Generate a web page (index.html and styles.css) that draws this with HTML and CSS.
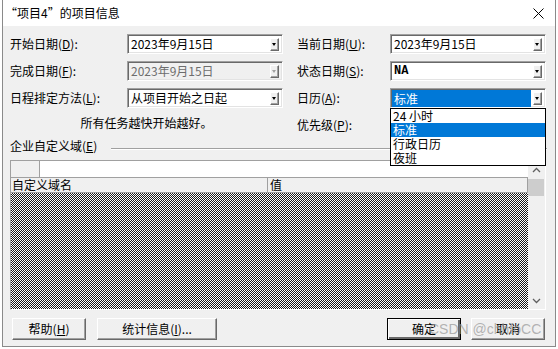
FILE: index.html
```html
<!DOCTYPE html>
<html>
<head>
    <title>项目信息</title>
    <link rel="stylesheet" href="styles.css">
</head>
<body>

<div class="window">
    <div class="titlebar">
        <span class="title">“项目4”的项目信息</span>
        <svg class="close" width="11" height="11" viewBox="0 0 11 11">
            <path d="M0.5 0.5L10.5 10.5M10.5 0.5L0.5 10.5" stroke="#000" stroke-width="1" fill="none"/>
        </svg>
    </div>

    <div class="content">
        <div class="form">
            <label>开始日期(<u>D</u>):</label>
            <div class="combo"><span class="value">2023年9月15日</span><span class="drop"></span></div>
            <label>当前日期(<u>U</u>):</label>
            <div class="combo"><span class="value">2023年9月15日</span><span class="drop"></span></div>

            <label>完成日期(<u>F</u>):</label>
            <div class="combo disabled"><span class="value">2023年9月15日</span><span class="drop"></span></div>
            <label>状态日期(<u>S</u>):</label>
            <div class="combo"><span class="value mono">NA</span><span class="drop"></span></div>

            <label>日程排定方法(<u>L</u>):</label>
            <div class="combo"><span class="value">从项目开始之日起</span><span class="drop"></span></div>
            <label>日历(<u>A</u>):</label>
            <div class="combo open">
                <span class="value"><span class="selected">标准</span></span><span class="drop"></span>
                <ul class="droplist">
                    <li>24&nbsp;小时</li>
                    <li class="active">标准</li>
                    <li>行政日历</li>
                    <li>夜班</li>
                </ul>
            </div>

            <div class="note">所有任务越快开始越好。</div>
            <label>优先级(<u>P</u>):</label>
            <div class="combo"><span class="value"></span><span class="drop"></span></div>
        </div>

        <div class="group-head">
            <span>企业自定义域(<u>E</u>)</span>
            <span class="groove"></span>
        </div>

        <div class="grid">
            <div class="grid-main">
                <div class="edit-row">
                    <span class="corner"></span>
                    <span class="edit-cell"></span>
                </div>
                <div class="head-row">
                    <span class="col-name">自定义域名</span>
                    <span class="col-value">值</span>
                </div>
                <div class="empty"></div>
            </div>
            <div class="scrollbar">
                <div class="arrow">
                    <svg width="9" height="6" viewBox="0 0 9 6"><polyline points="1,5 4.5,1.5 8,5" stroke="#606060" stroke-width="1.3" fill="none"/></svg>
                </div>
                <div class="thumb"></div>
                <div class="track"></div>
                <div class="arrow">
                    <svg width="9" height="6" viewBox="0 0 9 6"><polyline points="1,1 4.5,4.5 8,1" stroke="#606060" stroke-width="1.3" fill="none"/></svg>
                </div>
            </div>
        </div>

        <div class="buttons">
            <button class="btn">帮助(<u>H</u>)</button>
            <button class="btn wide">统计信息(<u>I</u>)...</button>
            <span class="spacer"></span>
            <button class="btn default">确定</button>
            <button class="btn">取消</button>
        </div>
    </div>

    <div class="watermark">CSDN @chhfoCC</div>
</div>

</body>
</html>
```

FILE: styles.css
```css
html, body {
    margin: 0;
    background-color: #ffffff;
}

body {
    font-family: "Noto Sans CJK SC", "Microsoft YaHei", sans-serif;
    font-size: 12px;
    color: #000000;
}

u {
    text-decoration: underline;
    text-underline-offset: 1px;
}

.window {
    position: relative;
    margin-left: 2px;
    width: 554px;
    height: 347px;
    box-sizing: border-box;
    border: 1px solid #8a8a8a;
    border-top: none;
    background-color: #f0f0f0;
    overflow: hidden;
}

.titlebar {
    height: 26px;
    background-color: #ffffff;
    display: flex;
    align-items: center;
    justify-content: space-between;
    padding: 0 11px 0 2px;
}

.title {
    line-height: 16px;
}

.content {
    padding: 8px 8px 0 7px;
}

/* top form: label / combo / label / combo */
.form {
    display: grid;
    grid-template-columns: 117px 170px 93px 156px;
    grid-auto-rows: 20px;
    row-gap: 7px;
    align-items: center;
}

.form label {
    line-height: 16px;
    white-space: nowrap;
}

.combo {
    position: relative;
    width: 156px;
    height: 20px;
    box-sizing: border-box;
    display: flex;
    align-items: center;
    background-color: #ffffff;
    border-style: solid;
    border-width: 1px;
    border-color: #a0a0a0 #ffffff #ffffff #a0a0a0;
    box-shadow: inset 1px 1px #696969, inset -1px -1px #e3e3e3;
}

.combo .value {
    flex: 1;
    height: 16px;
    line-height: 16px;
    padding-left: 3px;
    white-space: nowrap;
    overflow: hidden;
}

.combo .mono {
    font-family: "Liberation Mono", monospace;
    font-weight: bold;
}

.combo.disabled {
    background-color: #f0f0f0;
}

.combo.disabled .value {
    color: #6d6d6d;
}

.drop {
    position: relative;
    width: 9px;
    height: 13px;
    margin: 1px 3px 0 2px;
    box-sizing: border-box;
    background-color: #f0f0f0;
    border: 1px solid;
    border-color: #ffffff #696969 #696969 #ffffff;
    box-shadow: inset -1px -1px #a0a0a0;
}

.drop::after {
    content: "";
    position: absolute;
    left: 1px;
    top: 4px;
    border-left: 2.5px solid transparent;
    border-right: 2.5px solid transparent;
    border-top: 3px solid #000000;
}

.combo.disabled .drop::after {
    border-top-color: #a0a0a0;
}

.combo.open .value {
    padding-left: 1px;
    height: 17px;
}

.selected {
    display: block;
    height: 17px;
    line-height: 17px;
    padding-left: 2px;
    background-color: #0078d7;
    color: #ffffff;
}

.droplist {
    position: absolute;
    top: 19px;
    left: -1px;
    width: 156px;
    box-sizing: border-box;
    margin: 0;
    padding: 0;
    list-style: none;
    background-color: #ffffff;
    border: 1px solid #000000;
    z-index: 2;
}

.droplist li {
    height: 14px;
    line-height: 14px;
    padding-left: 2px;
}

.droplist li.active {
    background-color: #0078d7;
    color: #ffffff;
}

.note {
    grid-column: 1 / 3;
    padding-right: 14px;
    text-align: center;
    line-height: 16px;
    align-self: start;
}

/* group box heading with etched line */
.group-head {
    display: flex;
    align-items: center;
    height: 16px;
    margin-top: 3px;
    line-height: 16px;
}

.groove {
    flex: 1;
    margin: 5px 0 0 14px;
    border-top: 1px solid #a0a0a0;
    border-bottom: 1px solid #ffffff;
}

/* fields grid */
.grid {
    display: flex;
    height: 150px;
    width: 536px;
    box-sizing: border-box;
    margin-top: 6px;
    border: 1px solid;
    border-color: #a0a0a0 #ffffff #ffffff #a0a0a0;
}

.grid-main {
    flex: 1;
    display: flex;
    flex-direction: column;
}

.edit-row {
    display: flex;
    height: 16px;
    background-color: #ffffff;
}

.corner {
    width: 28px;
    background-color: #f0f0f0;
    border-right: 1px solid #a0a0a0;
}

.head-row {
    display: flex;
    height: 16px;
    box-sizing: border-box;
    background-color: #f0f0f0;
    border-top: 1px solid #a0a0a0;
    border-bottom: 1px solid #a0a0a0;
    border-right: 1px solid #a0a0a0;
    line-height: 14px;
}

.col-name {
    width: 255px;
    padding-left: 1px;
    border-right: 1px solid #a0a0a0;
}

.col-value {
    padding-left: 2px;
}

.empty {
    flex: 1;
    background: repeating-conic-gradient(#1a1a1a 0 25%, #ffffff 0 50%) 0 0 / 2px 2px;
}

.scrollbar {
    width: 17px;
    display: flex;
    flex-direction: column;
    background-color: #f0f0f0;
}

.arrow {
    height: 17px;
    display: flex;
    align-items: center;
    justify-content: center;
}

.thumb {
    height: 17px;
    margin: 1px 1px 0 0;
    background-color: #cdcdcd;
}

.track {
    flex: 1;
}

/* bottom buttons */
.buttons {
    display: flex;
    gap: 11px;
    margin-top: 8px;
    padding: 0 2px;
}

.spacer {
    flex: 1;
}

.btn {
    width: 74px;
    height: 22px;
    padding: 0;
    font-family: inherit;
    font-size: 12px;
    line-height: 16px;
    color: #000000;
    background-color: #f0f0f0;
    border: 1px solid;
    border-color: #ffffff #696969 #696969 #ffffff;
    box-shadow: inset -1px -1px #a0a0a0;
}

.btn.wide {
    width: 120px;
}

.btn.default {
    border: 1px solid #000000;
    box-shadow: inset 1px 1px #ffffff, inset -2px -2px #696969, inset -1px -1px #a0a0a0;
    margin-right: -1px;
}

.watermark {
    position: absolute;
    left: 426px;
    top: 320px;
    font-family: "Liberation Sans", Arial, sans-serif;
    font-size: 14px;
    line-height: 18px;
    color: rgba(150, 150, 150, 0.7);
}
```
